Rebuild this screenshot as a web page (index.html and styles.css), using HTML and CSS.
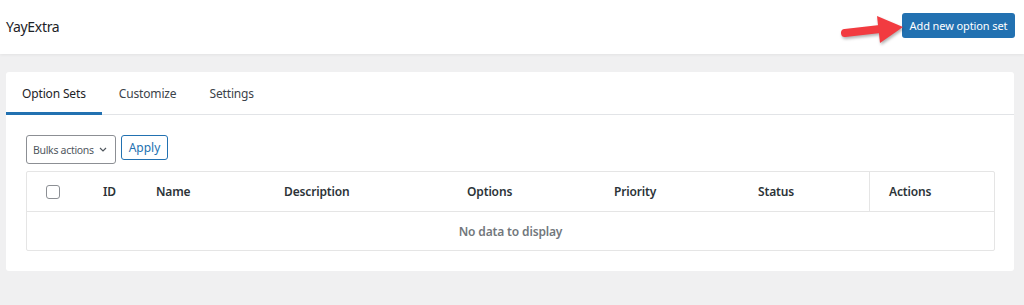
FILE: index.html
```html
<!DOCTYPE html>
<html lang="en">
<head>
    <meta charset="UTF-8">
    <title>YayExtra</title>
    <link rel="stylesheet" href="styles.css">
</head>
<body>
    <header class="topbar">
        <div class="brand">YayExtra</div>
        <div class="topbar-actions">
            <svg class="arrow" width="64" height="34" viewBox="0 0 64 34">
                <line x1="5" y1="21" x2="40" y2="17" stroke="#f23b40" stroke-width="8" stroke-linecap="round"/>
                <polygon points="37,4 63,15 40,31" fill="#f23b40"/>
            </svg>
            <button class="btn-primary">Add new option set</button>
        </div>
    </header>
    <main class="page">
        <div class="card">
            <nav class="tabs">
                <a class="tab active">Option Sets</a>
                <a class="tab">Customize</a>
                <a class="tab">Settings</a>
            </nav>
            <div class="card-body">
                <div class="toolbar">
                    <div class="select">Bulks actions
                        <svg width="8" height="5" viewBox="0 0 8 5"><path d="M1 1l3 3 3-3" fill="none" stroke="#50575e" stroke-width="1.2"/></svg>
                    </div>
                    <button class="btn-outline">Apply</button>
                </div>
                <div class="table">
                    <div class="row head">
                        <div class="cell cb"><span class="checkbox"></span></div>
                        <div class="cell">ID</div>
                        <div class="cell">Name</div>
                        <div class="cell">Description</div>
                        <div class="cell">Options</div>
                        <div class="cell">Priority</div>
                        <div class="cell">Status</div>
                        <div class="cell actions">Actions</div>
                    </div>
                    <div class="empty">No data to display</div>
                </div>
            </div>
        </div>
    </main>
</body>
</html>
```

FILE: styles.css
```css
body {
    margin: 0;
    font-family: 'Noto Sans', 'Open Sans', sans-serif;
    font-size: 12px;
    letter-spacing: -0.15px;
    color: #1d2327;
    background-color: #f0f0f1;
    height: 305px;
}

.topbar {
    height: 54px;
    background: #fff;
    display: flex;
    align-items: center;
    justify-content: space-between;
    padding: 0 9px 0 6px;
    box-shadow: 0 1px 3px rgba(0, 0, 0, 0.06);
}

.brand {
    font-size: 14px;
    letter-spacing: -0.3px;
    color: #1d2327;
    margin-top: -1px;
}

.topbar-actions {
    display: flex;
    align-items: center;
    margin-top: -3px;
}

.arrow {
    display: block;
    margin-right: -2px;
    margin-top: 6px;
    position: relative;
    z-index: 1;
    filter: drop-shadow(1px 2px 1.5px rgba(0, 0, 0, 0.3));
}

.btn-primary {
    height: 25px;
    width: 113px;
    padding: 0;
    background: #2271b1;
    color: #fff;
    border: none;
    border-radius: 3px;
    font-family: inherit;
    font-size: 11px;
    letter-spacing: -0.1px;
    white-space: nowrap;
}

.page {
    padding: 18px 10px 0 6px;
}

.card {
    background: #fff;
    border-radius: 3px;
}

.tabs {
    display: flex;
    height: 42px;
    border-bottom: 1px solid #e2e4e7;
    gap: 1px;
}

.tab {
    display: flex;
    align-items: center;
    padding: 0 16px;
    color: #3c434a;
    border-bottom: 3px solid transparent;
    margin-bottom: -1px;
    padding-top: 2px;
}

.tab.active {
    color: #1d2327;
    border-bottom-color: #2271b1;
}

.card-body {
    padding: 20px 19px 20px 20px;
}

.toolbar {
    display: flex;
    align-items: flex-start;
    gap: 5px;
}

.select {
    box-sizing: border-box;
    width: 90px;
    height: 29px;
    border: 1px solid #8c8f94;
    border-radius: 3px;
    display: flex;
    align-items: center;
    justify-content: space-between;
    padding: 0 8px 0 6px;
    font-size: 10.5px;
    letter-spacing: -0.3px;
    color: #50575e;
    white-space: nowrap;
}

.btn-outline {
    box-sizing: border-box;
    width: 47px;
    height: 25px;
    padding: 0;
    background: #fff;
    border: 1px solid #2271b1;
    border-radius: 3px;
    color: #2271b1;
    font-family: inherit;
    font-size: 12px;
}

.table {
    margin-top: 7px;
    border: 1px solid #e5e5e5;
    border-radius: 2px;
}

.row {
    display: grid;
    grid-template-columns: 76px 53px 128px 183px 147px 144px 111px 1fr;
    height: 39px;
    border-bottom: 1px solid #e5e5e5;
}

.cell {
    display: flex;
    align-items: center;
    font-weight: 600;
    color: #2c3338;
}

.cell.cb {
    padding-left: 19px;
}

.cell.actions {
    border-left: 1px solid #e5e5e5;
    padding-left: 19px;
}

.checkbox {
    box-sizing: border-box;
    width: 14px;
    height: 14px;
    border: 1px solid #8c8f94;
    border-radius: 3px;
}

.empty {
    height: 38px;
    display: flex;
    align-items: center;
    justify-content: center;
    font-weight: 600;
    color: #72777c;
}
```
